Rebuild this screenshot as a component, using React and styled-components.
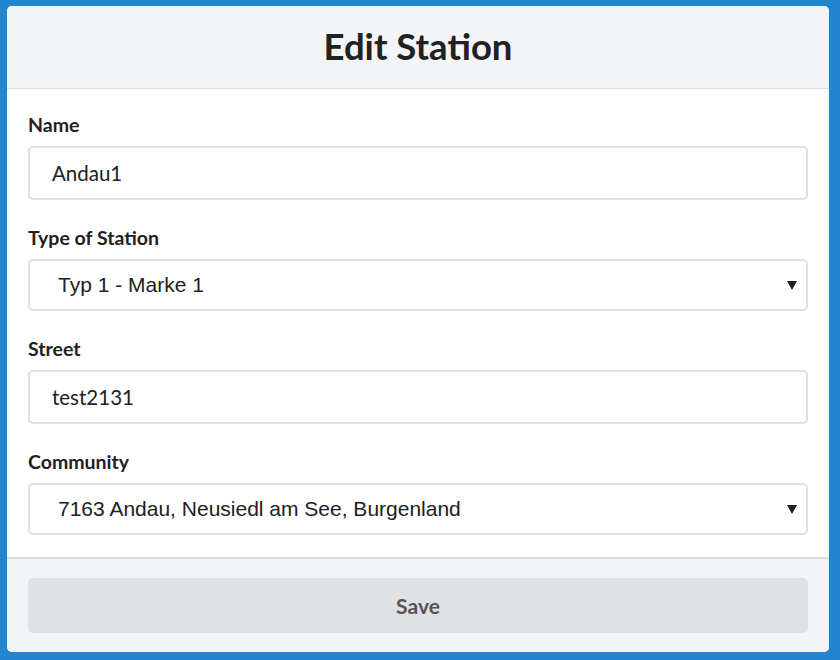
import React from 'react';
import styled, { createGlobalStyle } from 'styled-components';

const GlobalStyle = createGlobalStyle`
  html, body {
    margin: 0;
    padding: 0;
    background: #2185d0;
  }
  body {
    font-family: Lato, "Liberation Sans", sans-serif;
  }
`;

const Page = styled.div`
  padding: 6px 11px 6px 7px;
`;

const Card = styled.div`
  background: #fff;
  border-radius: 5px;
  overflow: hidden;
  display: flex;
  flex-direction: column;
`;

const Header = styled.div`
  height: 82px;
  background: #f3f4f5;
  border-bottom: 1px solid #dcdcdd;
  display: flex;
  align-items: center;
  justify-content: center;
`;

const Title = styled.h1`
  margin: 0 0 2px;
  font-size: 36.5px;
  font-weight: 700;
  color: #212121;
  font-family: Lato, sans-serif;
`;

const Form = styled.div`
  padding: 25px 21px 22px 21px;
  display: flex;
  flex-direction: column;
  gap: 27px;
`;

const Field = styled.div`
  display: flex;
  flex-direction: column;
`;

const Label = styled.label`
  font-size: 19.5px;
  line-height: 22px;
  font-weight: 700;
  color: #212121;
  margin-bottom: 10px;
`;

const Input = styled.div`
  height: 54px;
  box-sizing: border-box;
  border: 2px solid #e0e0e0;
  border-radius: 5px;
  padding: 0 22px;
  display: flex;
  align-items: center;
  font-family: Lato, sans-serif;
  font-size: 20.5px;
  color: #212121;
`;

const Select = styled.div`
  position: relative;
  height: 52px;
  box-sizing: border-box;
  border: 2px solid #e0e0e0;
  border-radius: 5px;
  padding: 0 28px;
  display: flex;
  align-items: center;
  font-family: "Liberation Sans", Arial, sans-serif;
  font-size: 21px;
  color: #212121;
`;

const Arrow = styled.svg`
  position: absolute;
  right: 9px;
  top: 50%;
  transform: translateY(-50%);
`;

const Footer = styled.div`
  background: #f3f4f5;
  border-top: 2px solid #dcdcdd;
  padding: 19px 21px 19px 21px;
`;

const Button = styled.button`
  display: block;
  width: 100%;
  height: 55px;
  border: none;
  border-radius: 5px;
  background: #e0e1e2;
  color: #555;
  font-family: Lato, sans-serif;
  font-size: 21px;
  font-weight: 700;
`;

function Caret() {
  return (
    <Arrow width="10" height="10" viewBox="0 0 10 10">
      <path d="M0 1 L10 1 L5 10 Z" fill="#212121" />
    </Arrow>
  );
}

const fields = [
  { label: 'Name', value: 'Andau1' },
  { label: 'Type of Station', value: 'Typ 1 - Marke 1', select: true },
  { label: 'Street', value: 'test2131' },
  { label: 'Community', value: '7163 Andau, Neusiedl am See, Burgenland', select: true },
];

function App() {
  return (
    <>
      <GlobalStyle />
      <Page>
        <Card>
          <Header>
            <Title>Edit Station</Title>
          </Header>
          <Form>
            {fields.map((f) => (
              <Field key={f.label}>
                <Label>{f.label}</Label>
                {f.select ? (
                  <Select>
                    {f.value}
                    <Caret />
                  </Select>
                ) : (
                  <Input>{f.value}</Input>
                )}
              </Field>
            ))}
          </Form>
          <Footer>
            <Button>Save</Button>
          </Footer>
        </Card>
      </Page>
    </>
  );
}

export default App;
